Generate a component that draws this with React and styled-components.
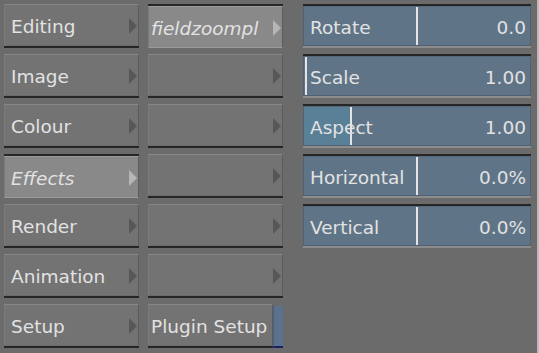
import styled, { createGlobalStyle } from "styled-components";

const GlobalStyle = createGlobalStyle`
  html, body {
    margin: 0;
    padding: 0;
    background: #6b6b6b;
  }
`;

const Page = styled.div`
  width: 539px;
  height: 353px;
  box-sizing: border-box;
  display: flex;
  align-items: flex-start;
  padding: 4px 0 0 4px;
  background: #6b6b6b;
  border-right: 2px solid #b8b8b8;
  font-family: "DejaVu Sans", "Liberation Sans", sans-serif;
  font-size: 18.5px;
  color: #e2e2e2;
  overflow: hidden;
`;

const MenuColumn = styled.div`
  width: 135px;
  display: flex;
  flex-direction: column;
  gap: 6px;
  margin-right: ${(p) => p.$gap}px;
`;

/* a key is 44px: a 42px face plus a 2px dark shadow line, above it when pressed */
const Key = styled.div`
  flex: 1;
  height: 44px;
  box-sizing: border-box;
  border-top: ${(p) => (p.$pressed ? "2px solid #262626" : "none")};
  border-bottom: ${(p) => (p.$pressed ? "none" : "2px solid #262626")};
`;

const Face = styled.div`
  height: 42px;
  box-sizing: border-box;
  display: flex;
  align-items: center;
  justify-content: space-between;
  padding: 3px 1px 0 ${(p) => p.$inset}px;
  background: ${(p) => (p.$pressed ? "#898989" : "#737373")};
  border-top: 1px solid ${(p) => (p.$pressed ? "#9c9c9c" : "#888888")};
  border-bottom: 1px solid ${(p) => (p.$pressed ? "#9a9a9a" : "#6a6a6a")};
  border-left: 1px solid #7a7a7a;
  border-right: 1px solid #5c5c5c;
  font-style: ${(p) => (p.$pressed ? "italic" : "normal")};
  white-space: nowrap;
`;

const Arrow = styled.span`
  width: 0;
  height: 0;
  margin-top: -2px;
  border-top: 8px solid transparent;
  border-bottom: 8px solid transparent;
  border-left: 8px solid ${(p) => (p.$pressed ? "#b6b6b6" : "#575757")};
`;

const SplitRow = styled.div`
  display: flex;
  height: 44px;
`;

const BlueStrip = styled.div`
  width: 10px;
  height: 44px;
  box-sizing: border-box;
  background: #5b7190;
  border-top: 2px solid #6b6b6b;
  border-bottom: 2px solid #1c1f66;
  border-left: 1px solid #4e6078;
`;

const SliderColumn = styled.div`
  width: 228px;
  display: flex;
  flex-direction: column;
  gap: 6px;
`;

const SliderWell = styled.div`
  height: 44px;
  box-sizing: border-box;
  border-top: 2px solid #262626;
  border-bottom: 2px solid #8c8c8c;
`;

const SliderBox = styled.div`
  position: relative;
  height: 40px;
  box-sizing: border-box;
  display: flex;
  align-items: center;
  justify-content: space-between;
  padding: 3px 4px 0 6px;
  background: #607487;
  border: 1px solid #4f6173;
  border-top-color: #56697b;
`;

const Fill = styled.div`
  position: absolute;
  left: 0;
  top: 0;
  bottom: 0;
  background: #5a8097;
`;

const Tick = styled.div`
  position: absolute;
  top: 0;
  bottom: 0;
  width: 2px;
  background: #e4e4e4;
`;

const SliderText = styled.span`
  position: relative;
  z-index: 1;
`;

const menus = [
  { label: "Editing" },
  { label: "Image" },
  { label: "Colour" },
  { label: "Effects", pressed: true },
  { label: "Render" },
  { label: "Animation" },
  { label: "Setup" },
];

const subs = [
  { label: "fieldzoompl", pressed: true },
  { label: "" },
  { label: "" },
  { label: "" },
  { label: "" },
  { label: "" },
];

const sliders = [
  { label: "Rotate", value: "0.0", tick: 112 },
  { label: "Scale", value: "1.00", tick: 1 },
  { label: "Aspect", value: "1.00", tick: 46, fill: 46 },
  { label: "Horizontal", value: "0.0%", tick: 112 },
  { label: "Vertical", value: "0.0%", tick: 112 },
];

function MenuKey({ label, pressed, inset = 6, arrow = true }) {
  return (
    <Key $pressed={pressed}>
      <Face $pressed={pressed} $inset={inset}>
        <span>{label}</span>
        {arrow && <Arrow $pressed={pressed} />}
      </Face>
    </Key>
  );
}

export default function App() {
  return (
    <>
      <GlobalStyle />
      <Page>
        <MenuColumn $gap={9}>
          {menus.map((m) => (
            <MenuKey key={m.label} label={m.label} pressed={m.pressed} />
          ))}
        </MenuColumn>

        <MenuColumn $gap={20}>
          {subs.map((s, i) => (
            <MenuKey key={i} label={s.label} pressed={s.pressed} inset={2} />
          ))}
          <SplitRow>
            <MenuKey label="Plugin Setup" inset={2} arrow={false} />
            <BlueStrip />
          </SplitRow>
        </MenuColumn>

        <SliderColumn>
          {sliders.map((s) => (
            <SliderWell key={s.label}>
              <SliderBox>
                {s.fill && <Fill style={{ width: s.fill }} />}
                <Tick style={{ left: s.tick }} />
                <SliderText>{s.label}</SliderText>
                <SliderText>{s.value}</SliderText>
              </SliderBox>
            </SliderWell>
          ))}
        </SliderColumn>
      </Page>
    </>
  );
}
